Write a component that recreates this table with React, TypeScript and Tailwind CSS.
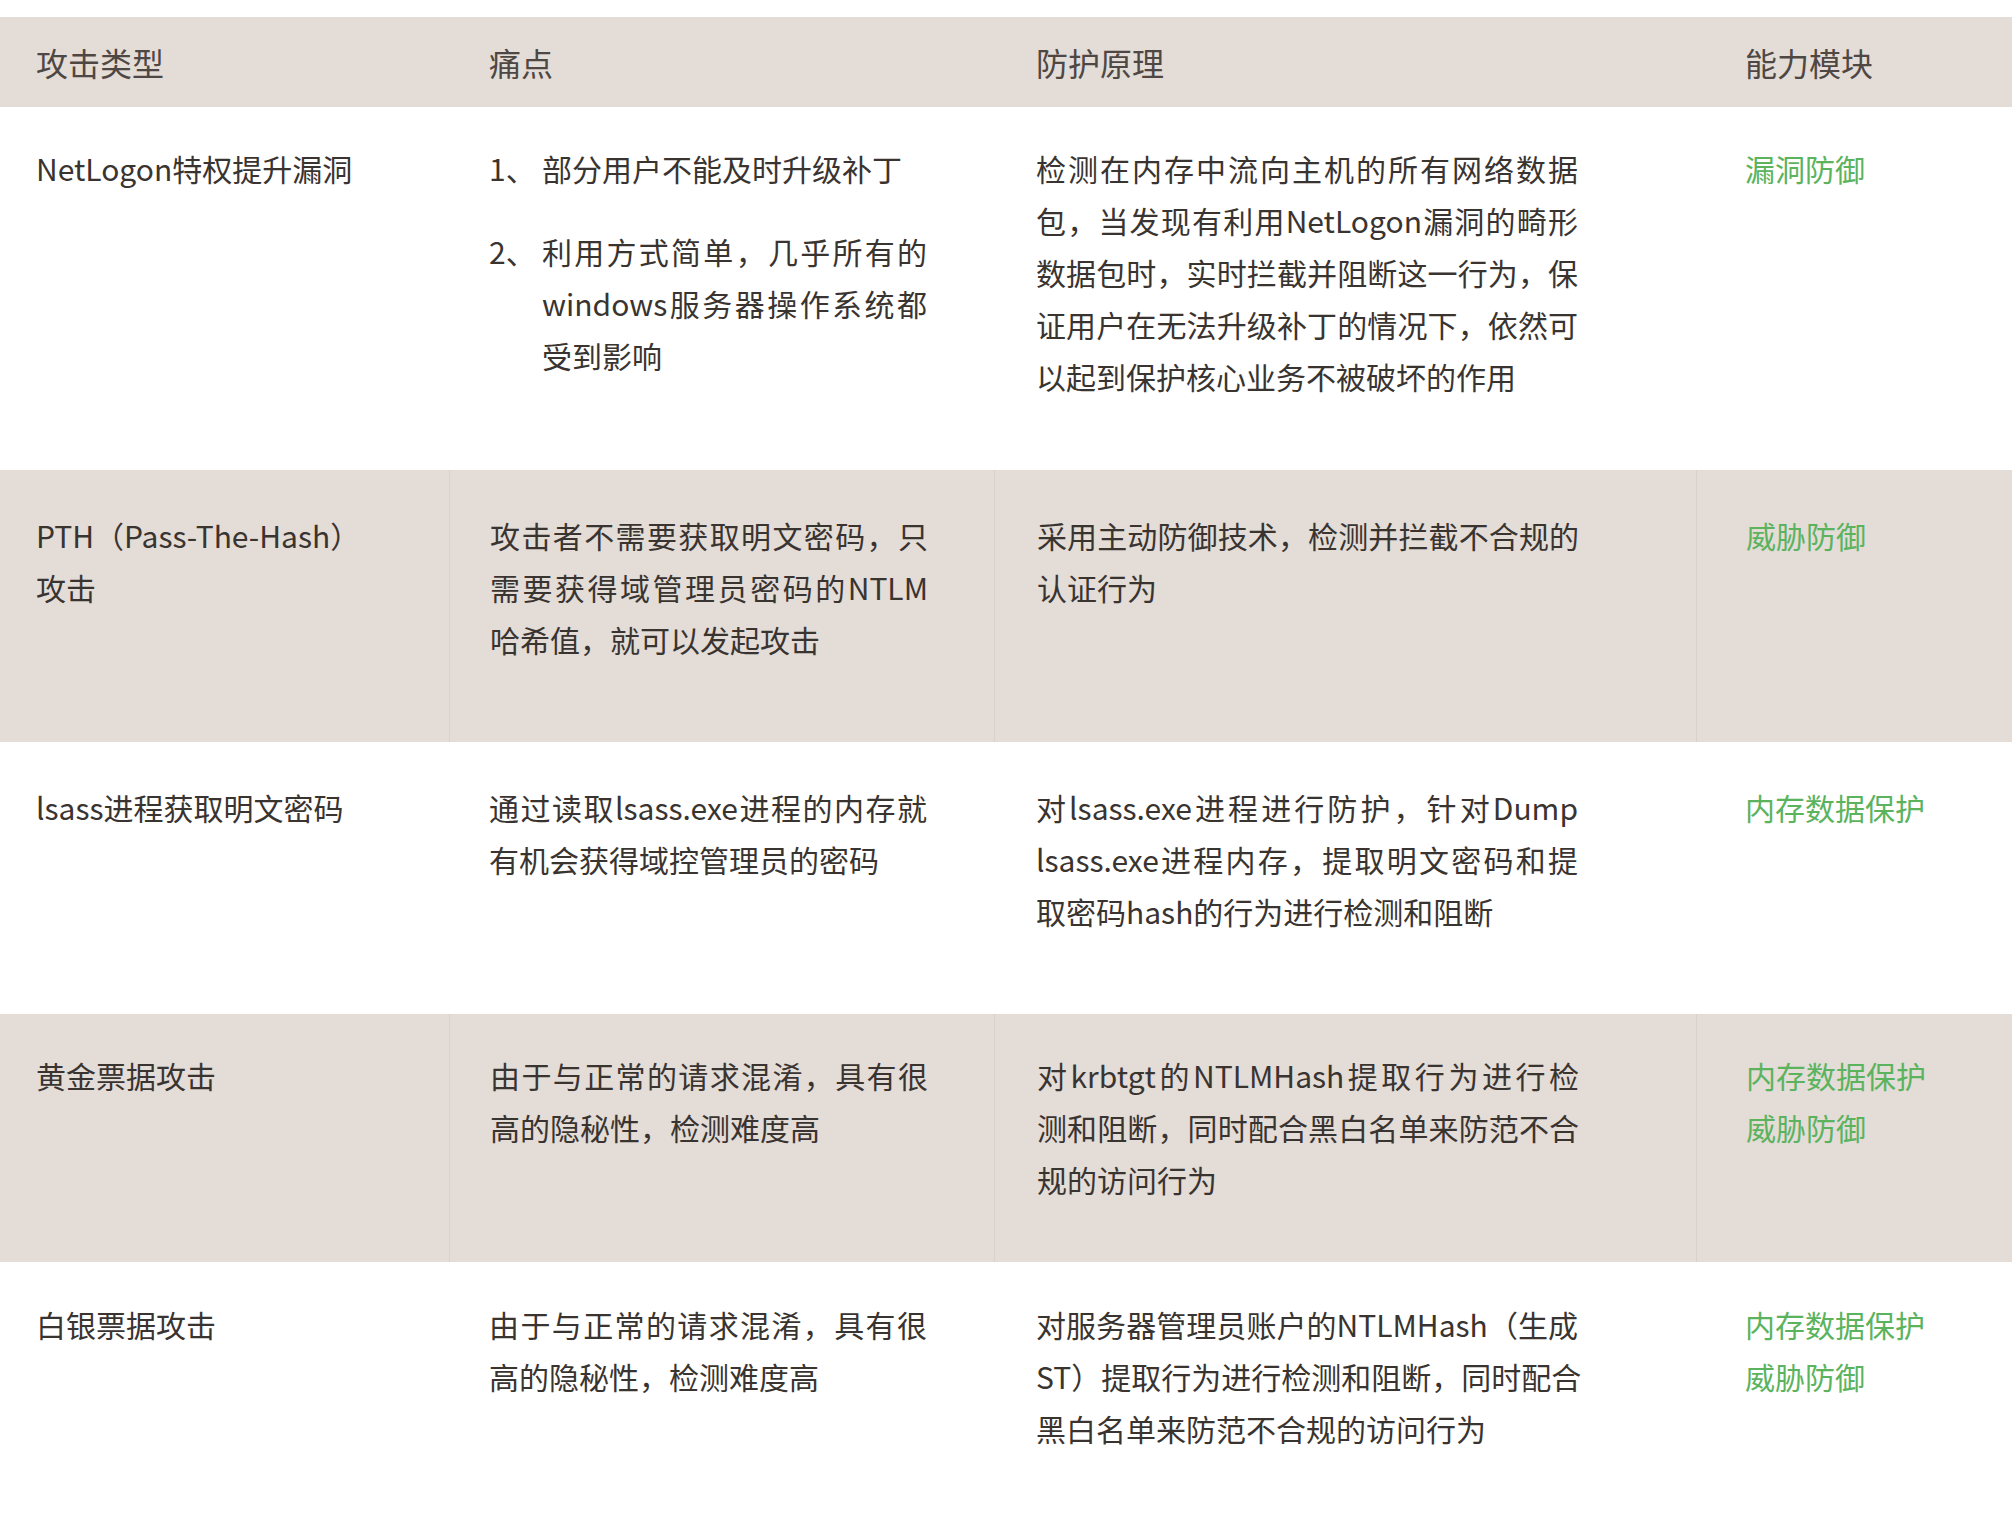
type Row = {
  kind: string[];
  pain: string[][];
  principle: string[];
  modules: string[];
  height: string;
  top: string;
  shaded: boolean;
};

const rows: Row[] = [
  {
    kind: ["NetLogon特权提升漏洞"],
    pain: [["部分用户不能及时升级补丁"], ["利用方式简单，几乎所有的", "windows服务器操作系统都", "受到影响"]],
    principle: [
      "检测在内存中流向主机的所有网络数据",
      "包，当发现有利用NetLogon漏洞的畸形",
      "数据包时，实时拦截并阻断这一行为，保",
      "证用户在无法升级补丁的情况下，依然可",
      "以起到保护核心业务不被破坏的作用",
    ],
    modules: ["漏洞防御"],
    height: "h-[363px]",
    top: "pt-[35px]",
    shaded: false,
  },
  {
    kind: ["PTH（Pass-The-Hash）", "攻击"],
    pain: [["攻击者不需要获取明文密码，只", "需要获得域管理员密码的NTLM", "哈希值，就可以发起攻击"]],
    principle: ["采用主动防御技术，检测并拦截不合规的", "认证行为"],
    modules: ["威胁防御"],
    height: "h-[272px]",
    top: "pt-[39px]",
    shaded: true,
  },
  {
    kind: ["lsass进程获取明文密码"],
    pain: [["通过读取lsass.exe进程的内存就", "有机会获得域控管理员的密码"]],
    principle: [
      "对lsass.exe进程进行防护，针对Dump",
      "lsass.exe进程内存，提取明文密码和提",
      "取密码hash的行为进行检测和阻断",
    ],
    modules: ["内存数据保护"],
    height: "h-[272px]",
    top: "pt-[39px]",
    shaded: false,
  },
  {
    kind: ["黄金票据攻击"],
    pain: [["由于与正常的请求混淆，具有很", "高的隐秘性，检测难度高"]],
    principle: ["对krbtgt的NTLMHash提取行为进行检", "测和阻断，同时配合黑白名单来防范不合", "规的访问行为"],
    modules: ["内存数据保护", "威胁防御"],
    height: "h-[248px]",
    top: "pt-[35px]",
    shaded: true,
  },
  {
    kind: ["白银票据攻击"],
    pain: [["由于与正常的请求混淆，具有很", "高的隐秘性，检测难度高"]],
    principle: [
      "对服务器管理员账户的NTLMHash（生成",
      "ST）提取行为进行检测和阻断，同时配合",
      "黑白名单来防范不合规的访问行为",
    ],
    modules: ["内存数据保护", "威胁防御"],
    height: "h-[252px]",
    top: "pt-[36px]",
    shaded: false,
  },
];

// every line but the last one is stretched to the column edge, as in the source
function Lines({ lines, className }: { lines: string[]; className: string }) {
  return (
    <div className={className}>
      {lines.map((line, i) => (
        <div
          key={i}
          className={
            i < lines.length - 1
              ? "whitespace-nowrap text-justify [text-align-last:justify]"
              : "text-left"
          }
        >
          {line}
        </div>
      ))}
    </div>
  );
}

function PainCell({ items }: { items: string[][] }) {
  if (items.length === 1) {
    return <Lines lines={items[0]} className="w-[438px]" />;
  }
  return (
    <div className="flex w-[438px] flex-col gap-[31px]">
      {items.map((lines, i) => (
        <div key={i} className="flex">
          <span className="w-[53px] shrink-0">{i + 1}、</span>
          <Lines lines={lines} className="w-[385px]" />
        </div>
      ))}
    </div>
  );
}

export default function App() {
  const grid = "grid grid-cols-[449px_545px_702px_316px]";
  const cellBorder = "border-l border-[#d9d1cb]";

  return (
    <div className="min-h-screen w-[2014px] bg-white pt-[17px] font-['Noto_Sans_CJK_SC','Noto_Sans',sans-serif] text-[30px] leading-[52px] text-[#3a3431]">
      <div className="w-[2012px]">
        <div className={`${grid} h-[90px] items-center bg-[#e3dcd7] text-[32px] text-[#4e4743]`}>
          <div className="pl-[36px]">攻击类型</div>
          <div className="pl-[40px]">痛点</div>
          <div className="pl-[42px]">防护原理</div>
          <div className="pl-[49px]">能力模块</div>
        </div>

        {rows.map((row, i) => (
          <div
            key={i}
            className={`${grid} ${row.height} ${row.shaded ? "bg-[#e3dcd7]" : "bg-white"}`}
          >
            <div className={`pl-[36px] ${row.top}`}>
              {row.kind.map((k) => (
                <div key={k}>{k}</div>
              ))}
            </div>
            <div className={`pl-[40px] ${row.top} ${row.shaded ? cellBorder : ""}`}>
              <PainCell items={row.pain} />
            </div>
            <div className={`pl-[42px] ${row.top} ${row.shaded ? cellBorder : ""}`}>
              <Lines lines={row.principle} className="w-[542px]" />
            </div>
            <div className={`pl-[49px] ${row.top} text-[#5bb35e] ${row.shaded ? cellBorder : ""}`}>
              {row.modules.map((m) => (
                <div key={m}>{m}</div>
              ))}
            </div>
          </div>
        ))}
      </div>
    </div>
  );
}
